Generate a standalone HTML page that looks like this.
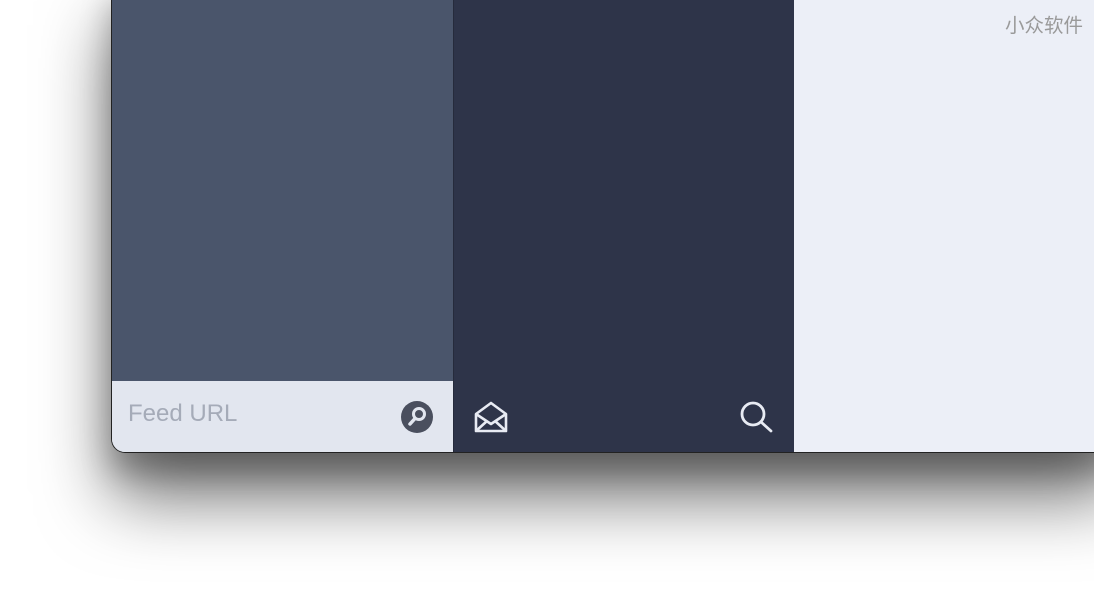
<!DOCTYPE html>
<html><head><meta charset="utf-8"><style>
body{margin:0;width:1094px;height:601px;background:#fff;overflow:hidden;position:relative;font-family:"Liberation Sans","Noto Sans CJK SC",sans-serif}
.win{position:absolute;left:111px;top:-20px;width:1010px;height:473px;border-radius:0 0 14px 14px;overflow:hidden;border:1px solid #222;border-top:none;box-shadow:0 45px 70px rgba(0,0,0,0.55),0 20px 30px rgba(0,0,0,0.25);background:#eceff7;box-sizing:border-box}
.c1{position:absolute;left:0;top:0;width:341px;height:401px;background:#4a556b}
.b1{position:absolute;left:0;top:401px;width:341px;height:72px;background:#e2e6ef}
.c2{position:absolute;left:341px;top:0;width:341px;height:473px;background:#2e3449;border-left:1px solid #262b3c;box-sizing:border-box}
.t{position:absolute;left:16px;top:420px;font-size:24px;color:#a5abb8}
.wm{position:absolute;left:1005px;top:9px;font-size:19.5px;color:#9a9a9a}
</style></head><body>
<div class="win">
<div class="c1"></div>
<div class="b1"></div>
<div class="t">Feed URL</div>
<svg style="position:absolute;left:288px;top:420px" width="34" height="34" viewBox="0 0 34 34"><circle cx="17" cy="17" r="16" fill="#4a4f5e"/><circle cx="19" cy="14" r="5.5" fill="none" stroke="#e2e6ef" stroke-width="3"/><line x1="15" y1="18.5" x2="10" y2="24" stroke="#e2e6ef" stroke-width="3.5" stroke-linecap="round"/></svg>
<div class="c2"></div>
<svg style="position:absolute;left:361px;top:420px" width="36" height="36" viewBox="0 0 36 36" fill="none" stroke="#e8ebf3" stroke-width="2.6" stroke-linejoin="round"><path d="M3 14 L18 3 L33 14 V31 H3 Z"/><path d="M3 14 L18 24 L33 14"/><path d="M3 31 L14 21 M33 31 L22 21"/></svg>
<svg style="position:absolute;left:626px;top:419px" width="36" height="36" viewBox="0 0 36 36" fill="none" stroke="#e8ebf3" stroke-width="2.8" stroke-linecap="round"><circle cx="15" cy="15" r="11"/><line x1="23" y1="23" x2="33" y2="32"/></svg>
</div>
<div class="wm">小众软件</div>
</body></html>
